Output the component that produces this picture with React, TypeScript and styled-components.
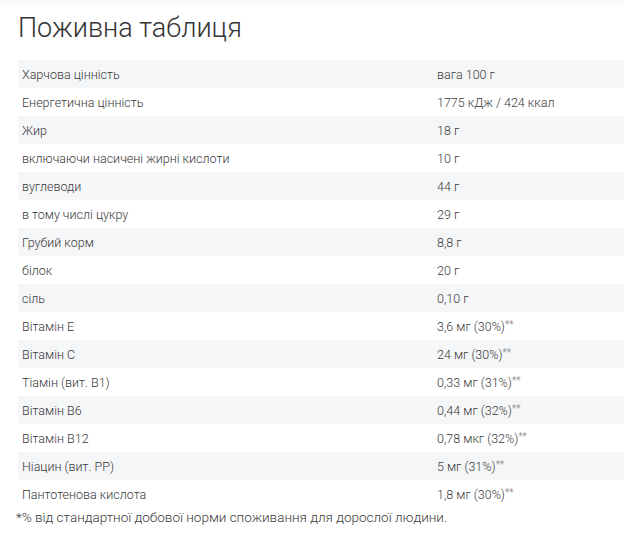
import React from "react";
import styled, { createGlobalStyle } from "styled-components";

const GlobalStyle = createGlobalStyle`
  html, body {
    margin: 0;
    padding: 0;
    background: #ffffff;
    font-family: Roboto, "Liberation Sans", sans-serif;
  }
`;

const Page = styled.div`
  width: 624px;
  height: 545px;
  overflow: hidden;
  background: linear-gradient(#f9f9f9 0, #fdfdfd 5px, #ffffff 7px);
  padding: 0 0 0 18px;
  box-sizing: border-box;
`;

const Title = styled.h2`
  margin: 0;
  padding-top: 11px;
  height: 60px;
  box-sizing: border-box;
  font-size: 27px;
  line-height: 34px;
  font-weight: 300;
  color: #333333;
`;

const Table = styled.table`
  width: 606px;
  border-collapse: collapse;
  font-size: 12.5px;
  font-weight: 300;
  color: #3a3a3a;
`;

const Row = styled.tr<{ $shaded: boolean }>`
  height: 28px;
  background: ${p => (p.$shaded ? "#f5f6f8" : "#ffffff")};
`;

const Cell = styled.td<{ $first?: boolean }>`
  padding: 0 0 0 4px;
  width: ${p => (p.$first ? "411px" : "auto")};
  vertical-align: middle;
  white-space: nowrap;
`;

const Stars = styled.sup`
  font-size: 10px;
  vertical-align: 3px;
  line-height: 0;
  color: #777777;
`;

const Note = styled.p`
  margin: 0 0 0 -2px;
  font-size: 13.5px;
  font-weight: 300;
  line-height: 18px;
  color: #3a3a3a;
`;

const rows: [string, string, boolean?][] = [
  ["Харчова цінність", "вага 100 г"],
  ["Енергетична цінність", "1775 кДж / 424 ккал"],
  ["Жир", "18 г"],
  ["включаючи насичені жирні кислоти", "10 г"],
  ["вуглеводи", "44 г"],
  ["в тому числі цукру", "29 г"],
  ["Грубий корм", "8,8 г"],
  ["білок", "20 г"],
  ["сіль", "0,10 г"],
  ["Вітамін Е", "3,6 мг (30%)", true],
  ["Вітамін С", "24 мг (30%)", true],
  ["Тіамін (вит. В1)", "0,33 мг (31%)", true],
  ["Вітамін В6", "0,44 мг (32%)", true],
  ["Вітамін В12", "0,78 мкг (32%)", true],
  ["Ніацин (вит. РР)", "5 мг (31%)", true],
  ["Пантотенова кислота", "1,8 мг (30%)", true]
];

export default function App() {
  return (
    <Page>
      <GlobalStyle />
      <Title>Поживна таблиця</Title>
      <Table>
        <tbody>
          {rows.map(([name, value, stars], i) => (
            <Row key={name} $shaded={i % 2 === 0}>
              <Cell $first>{name}</Cell>
              <Cell>
                {value}
                {stars && <Stars>**</Stars>}
              </Cell>
            </Row>
          ))}
        </tbody>
      </Table>
      <Note>*% від стандартної добової норми споживання для дорослої людини.</Note>
    </Page>
  );
}
